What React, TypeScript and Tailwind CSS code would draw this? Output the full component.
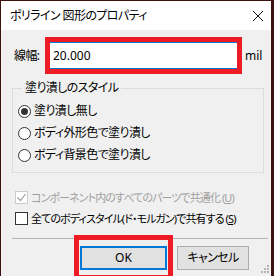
import React from "react";

const FONT = "[font-family:'Noto_Sans','Noto_Sans_CJK_JP',sans-serif] [font-feature-settings:'palt']";

function Radio({ checked, label }: { checked?: boolean; label: string }) {
  return (
    <div className="flex h-[22px] items-center">
      <div className="flex h-[13px] w-[13px] items-center justify-center rounded-full border border-[#333] bg-white">
        {checked && <div className="h-[7px] w-[7px] rounded-full bg-[#333]" />}
      </div>
      <span className="ml-[3px]">{label}</span>
    </div>
  );
}

function Check({ checked, disabled, children }: { checked?: boolean; disabled?: boolean; children: React.ReactNode }) {
  return (
    <div className={`flex h-[21px] items-center whitespace-nowrap pl-[14px] ${disabled ? "text-[#a0a0a0]" : "text-black"}`}>
      <div
        className={`flex h-[13px] w-[13px] shrink-0 items-center justify-center border bg-white ${
          disabled ? "border-[#cccccc]" : "border-[#333]"
        }`}
      >
        {checked && (
          <svg width="11" height="11" viewBox="0 0 11 11">
            <path d="M1.5 5.5 L4.5 8.5 L9.5 2" fill="none" stroke="#a0a0a0" strokeWidth="1.2" />
          </svg>
        )}
      </div>
      <span className="ml-[3px] text-[11px] tracking-[-0.9px]">{children}</span>
    </div>
  );
}

export default function App() {
  return (
    <div className={`h-[276px] w-[274px] overflow-hidden bg-[#3a1212] pl-px pt-px text-[12px] leading-[16px] tracking-[-0.6px] text-black ${FONT}`}>
      <div className="flex h-[275px] w-[270px] flex-col">
        {/* title bar */}
        <div className="flex h-[29px] shrink-0 items-center justify-between bg-white pl-[9px] pr-[7px]">
          <span>ポリライン 図形のプロパティ</span>
          <svg width="12" height="12" viewBox="0 0 12 12">
            <path d="M1 1 L11 11 M11 1 L1 11" stroke="#111" strokeWidth="1" />
          </svg>
        </div>

        <div className="relative flex-1 bg-[#f0f0f0] pt-[7px]">
          {/* line width */}
          <div className="flex items-center pl-[13px]">
            <span className="w-[31px]">線幅:</span>
            <div className="h-[37px] w-[197px] border-[5px] border-[#ed1c24]">
              <div className="flex h-full items-center border-y border-[#0078d7] bg-white pl-[3px] tracking-normal">20.000</div>
            </div>
            <span className="ml-[3px] tracking-normal">mil</span>
          </div>

          {/* fill style */}
          <fieldset className="ml-[11px] mt-[6px] w-[252px] border border-[#dcdcdc] px-[5px] pb-[6px]">
            <legend className="ml-[4px] px-[3px]">塗り潰しのスタイル</legend>
            <div className="mt-[4px]">
              <Radio checked label="塗り潰し無し" />
              <Radio label="ボディ外形色で塗り潰し" />
              <Radio label="ボディ背景色で塗り潰し" />
            </div>
          </fieldset>

          <div className="mt-[14px]">
            <Check checked disabled>
              コンポーネント内のすべてのパーツで共通化 (<span className="underline">U</span>)
            </Check>
            <Check>
              全てのボディスタイル(ド・モルガン)で共有する (<span className="underline">S</span>)
            </Check>
          </div>

          <div className="ml-[11px] mt-[9px] h-px w-[256px] bg-[#b4b4b4]" />

          <div className="mt-[7px] flex gap-[10px] pl-[79px] tracking-normal">
            <div className="relative">
              <button className="flex h-[24px] w-[87px] items-center justify-center border-2 border-[#0078d7] bg-[#e1e1e1]">
                OK
              </button>
              <div className="pointer-events-none absolute -left-[6px] -right-[6px] -top-[11px] h-[45px] border-[5px] border-[#ed1c24]" />
            </div>
            <button className="flex h-[24px] w-[72px] items-center justify-center border border-[#adadad] bg-[#e1e1e1] tracking-[-0.6px]">
              キャンセル
            </button>
          </div>

          {/* size grip */}
          <svg className="absolute bottom-[3px] right-[2px]" width="8" height="8" viewBox="0 0 8 8">
            <rect x="6" y="0" width="2" height="2" fill="#b4b4b4" />
            <rect x="3" y="3" width="2" height="2" fill="#b4b4b4" />
            <rect x="6" y="3" width="2" height="2" fill="#b4b4b4" />
            <rect x="0" y="6" width="2" height="2" fill="#b4b4b4" />
            <rect x="3" y="6" width="2" height="2" fill="#b4b4b4" />
            <rect x="6" y="6" width="2" height="2" fill="#b4b4b4" />
          </svg>
        </div>
      </div>
    </div>
  );
}
